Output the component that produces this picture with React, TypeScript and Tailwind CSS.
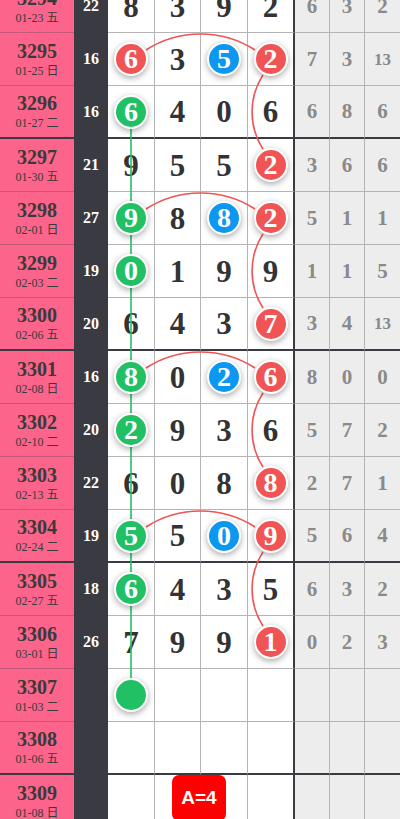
import React from 'react';

type Row = { id: string; date: string; n: string; cells: string[]; tail: string[] };

const rows: Row[] = [
  { id: '3294', date: '01-23 五', n: '22', cells: ['8', '3', '9', '2'], tail: ['6', '3', '2'] },
  { id: '3295', date: '01-25 日', n: '16', cells: ['6r', '3', '5b', '2r'], tail: ['7', '3', '13'] },
  { id: '3296', date: '01-27 二', n: '16', cells: ['6g', '4', '0', '6'], tail: ['6', '8', '6'] },
  { id: '3297', date: '01-30 五', n: '21', cells: ['9', '5', '5', '2r'], tail: ['3', '6', '6'] },
  { id: '3298', date: '02-01 日', n: '27', cells: ['9g', '8', '8b', '2r'], tail: ['5', '1', '1'] },
  { id: '3299', date: '02-03 二', n: '19', cells: ['0g', '1', '9', '9'], tail: ['1', '1', '5'] },
  { id: '3300', date: '02-06 五', n: '20', cells: ['6', '4', '3', '7r'], tail: ['3', '4', '13'] },
  { id: '3301', date: '02-08 日', n: '16', cells: ['8g', '0', '2b', '6r'], tail: ['8', '0', '0'] },
  { id: '3302', date: '02-10 二', n: '20', cells: ['2g', '9', '3', '6'], tail: ['5', '7', '2'] },
  { id: '3303', date: '02-13 五', n: '22', cells: ['6', '0', '8', '8r'], tail: ['2', '7', '1'] },
  { id: '3304', date: '02-24 二', n: '19', cells: ['5g', '5', '0b', '9r'], tail: ['5', '6', '4'] },
  { id: '3305', date: '02-27 五', n: '18', cells: ['6g', '4', '3', '5'], tail: ['6', '3', '2'] },
  { id: '3306', date: '03-01 日', n: '26', cells: ['7', '9', '9', '1r'], tail: ['0', '2', '3'] },
  { id: '3307', date: '01-03 二', n: '', cells: ['g', '', '', ''], tail: ['', '', ''] },
  { id: '3308', date: '01-06 五', n: '', cells: ['', '', '', ''], tail: ['', '', ''] },
  { id: '3309', date: '01-08 日', n: '', cells: ['', '', '', ''], tail: ['', '', ''] },
];

const thick = [2, 6, 10, 14];

const ballColor: Record<string, string> = {
  r: 'bg-[#f05454]',
  g: 'bg-[#22c064]',
  b: 'bg-[#0c97f0]',
};

const widths = ['w-[47px]', 'w-[46px]', 'w-[47px]', 'w-[47px]'];
const tailWidths = ['w-[35px]', 'w-[35px]', 'flex-1'];

function Cell({ v }: { v: string }) {
  const mark = v.slice(-1);
  if (ballColor[mark]) {
    return (
      <div
        className={`relative z-10 w-[34px] h-[34px] rounded-full border-2 border-white shadow-[0_2px_6px_rgba(0,0,0,0.35)] flex items-center justify-center text-white text-[28px] font-bold leading-none ${ballColor[mark]}`}
      >
        {v.slice(0, -1)}
      </div>
    );
  }
  return <span className="text-[31px] font-bold leading-none text-[#333]">{v}</span>;
}

// row centre inside the table = 53 * i + 26
const cy = (i: number) => 53 * i + 26;

export default function App() {
  const arcsTop = [1, 4, 7, 10];

  return (
    <div className="relative w-[400px] h-[819px] overflow-hidden bg-white font-['Liberation_Serif','Noto_Sans_CJK_SC',serif]">
      <div className="relative -mt-[20px]">
        {rows.map((r, i) => {
          const isThick = thick.includes(i);
          const bb = isThick ? 'border-b-2 border-b-[#3a3a42]' : 'border-b';
          return (
            <div key={r.id} className="flex h-[53px]">
              <div
                className={`w-[74px] h-full bg-[#fc648c] flex flex-col items-center justify-center text-[#3a3a3a] ${bb} ${isThick ? '' : 'border-b-[#c4587a]'}`}
              >
                <span className="text-[20px] font-bold leading-none">{r.id}</span>
                <span className="mt-[3px] text-[12px] leading-[14px]">{r.date}</span>
              </div>
              <div
                className={`w-[34px] h-full bg-[#3a3a42] flex items-center justify-center text-white text-[16px] font-bold ${bb} ${isThick ? '' : 'border-b-[#3a3a42]'}`}
              >
                {r.n}
              </div>
              {r.cells.map((c, j) => (
                <div
                  key={j}
                  className={`${widths[j]} h-full bg-white flex items-center justify-center ${bb} ${isThick ? '' : 'border-b-[#b4b4b4]'} ${j === 3 ? 'border-r-2 border-r-[#3a3a42]' : 'border-r border-r-[#b4b4b4]'}`}
                >
                  <Cell v={c} />
                </div>
              ))}
              {r.tail.map((t, j) => (
                <div
                  key={j}
                  className={`${tailWidths[j]} h-full bg-[#ededed] flex items-center justify-center font-bold text-[#8a8a8a] leading-none ${t.length > 1 ? 'text-[17px]' : 'text-[21px]'} ${bb} ${isThick ? '' : 'border-b-[#b4b4b4]'} ${j < 2 ? 'border-r border-r-[#b4b4b4]' : ''}`}
                >
                  {t}
                </div>
              ))}
            </div>
          );
        })}

        <svg className="absolute left-0 top-0 pointer-events-none" width="400" height="848" fill="none">
          <line x1="131" y1={cy(2)} x2="131" y2={cy(13)} stroke="#22c064" strokeWidth="1.6" />
          {arcsTop.map((i) => (
            <g key={i} stroke="#f05454" strokeWidth="1.6">
              <path d={`M 146 ${cy(i) - 9} A 101 101 0 0 1 255 ${cy(i) - 9}`} />
              <path d={`M 263 ${cy(i) + 16} A 68 68 0 0 0 263 ${cy(i) + 90}`} />
            </g>
          ))}
        </svg>
      </div>

      <div className="absolute left-[172px] top-[775px] w-[54px] h-[46px] rounded-[7px] bg-[#ff0000] flex items-center justify-center text-white text-[19px] font-bold font-['Liberation_Sans',sans-serif]">
        A=4
      </div>
    </div>
  );
}
